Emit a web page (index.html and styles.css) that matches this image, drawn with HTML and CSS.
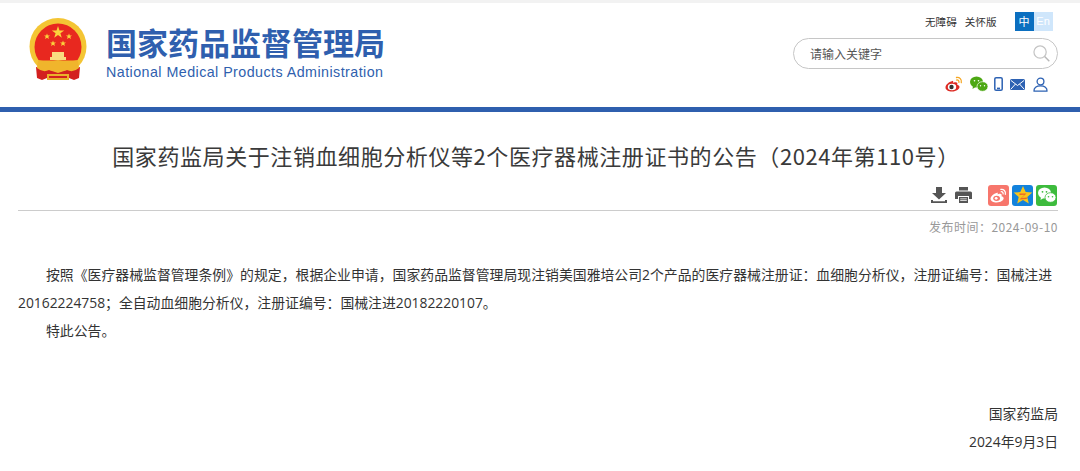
FILE: index.html
```html
<!DOCTYPE html>
<html lang="zh-CN">
<head>
<meta charset="utf-8">
<title>国家药监局关于注销血细胞分析仪等2个医疗器械注册证书的公告</title>
<link rel="stylesheet" href="styles.css">
</head>
<body>
<header class="site-header">
  <div class="brand">
    <svg class="emblem" viewBox="0 0 60 64" width="60" height="64" aria-hidden="true">
      <circle cx="30" cy="28.500" r="28.500" fill="#f4c534"/>
      <circle cx="30" cy="29" r="23.500" fill="#e8281f"/>
      <path d="M30 8l1.500 4.500h4.700l-3.800 2.800 1.400 4.500-3.800-2.800-3.800 2.800 1.400-4.500-3.800-2.800h4.700z" fill="#fbd33c"/>
      <path d="M19 15.500l.8 2h2.200l-1.700 1.300.6 2.100-1.900-1.200-1.900 1.200.6-2.100-1.700-1.300h2.200z M41 15.500l.8 2h2.200l-1.700 1.300.6 2.100-1.900-1.200-1.900 1.200.6-2.100-1.700-1.300h2.200z M25 22.500l.8 2h2.200l-1.700 1.300.6 2.100-1.900-1.200-1.900 1.200.6-2.100-1.700-1.300h2.200z M35 22.500l.8 2h2.200l-1.700 1.300.6 2.100-1.900-1.200-1.900 1.200.6-2.100-1.700-1.300h2.200z" fill="#fbd33c"/>
      <path d="M8 49L9 60 14 62 24 58 36 58 46 62 51 60 52 49 30 54z" fill="#d3201f"/>
      <path d="M22 42v-3h2v-5h12v5h2v3z" fill="#f9dc80"/>
      <path d="M10 42q10 1 20 0q10 1 20 0l1 8q-6 5-12 2l-9 3-9-3q-6 3-12-2z" fill="#f0b52c"/>
      <path d="M19 56h22v6H19z" fill="#eab02a"/>
      <path d="M21 58h18v2H21z" fill="#d3201f"/>
    </svg>
    <div class="brand-text">
      <div class="brand-cn">国家药品监督管理局</div>
      <div class="brand-en">National Medical Products Administration</div>
    </div>
  </div>
  <div class="tools">
    <div class="tool-links">
      <a class="tool-link">无障碍</a>
      <a class="tool-link">关怀版</a>
      <div class="lang"><span class="lang-zh">中</span><span class="lang-en">En</span></div>
    </div>
    <div class="search">
      <span class="search-text">请输入关键字</span>
      <svg class="search-icon" viewBox="0 0 18 18" width="17" height="17" aria-hidden="true">
        <circle cx="7.500" cy="7.500" r="6.500" fill="none" stroke="#c4c4c4" stroke-width="1.300"/>
        <path d="M12.300 12.300L17.300 17.300" stroke="#b8b8b8" stroke-width="1.500"/>
      </svg>
    </div>
    <div class="social">
      <svg viewBox="0 0 18 16" width="18" height="16" aria-hidden="true">
        <path d="M7.500 5C3.500 6 .5 9 .5 11.500c0 2.500 3 4 6.500 4 4.500 0 7.500-2.500 7.500-4.500 0-1.600-1.500-2-2.300-2.300.6-1.500.2-2.700-2-2.500-.8 0-1.700.5-2 .6 .2-1.500-.3-2.300-.7-1.800z" fill="#dd2a23"/>
        <ellipse cx="7" cy="11" rx="4.200" ry="3.200" fill="#fff"/>
        <circle cx="6.500" cy="11" r="2.200" fill="#333"/>
        <path d="M11.500 1.500c3-.6 5.500 2 4.800 5.200 M11.800 4c1.500-.3 2.400 1 2.100 2.400" fill="none" stroke="#f5a623" stroke-width="1.300" stroke-linecap="round"/>
      </svg>
      <svg viewBox="0 0 18 16" width="18" height="16" aria-hidden="true">
        <ellipse cx="6.500" cy="6" rx="6.500" ry="5.500" fill="#4da814"/>
        <path d="M3 10l-.5 3 3-2z" fill="#4da814"/>
        <ellipse cx="12.500" cy="10.500" rx="5.500" ry="4.800" fill="#4da814" stroke="#fff" stroke-width=".7"/>
        <circle cx="4.500" cy="4.800" r=".8" fill="#fff"/><circle cx="8.500" cy="4.800" r=".8" fill="#fff"/>
        <circle cx="10.500" cy="9.800" r=".7" fill="#fff"/><circle cx="14.500" cy="9.800" r=".7" fill="#fff"/>
      </svg>
      <svg viewBox="0 0 9 14" width="9" height="14" aria-hidden="true">
        <rect x=".8" y=".8" width="7.400" height="12.400" rx="1.300" fill="none" stroke="#2d62b3" stroke-width="1.500"/>
        <rect x="3" y="10.600" width="3" height="1.600" fill="#2d62b3"/>
      </svg>
      <svg viewBox="0 0 15 11" width="15" height="11" aria-hidden="true">
        <rect width="15" height="11" rx="1.500" fill="#2d62b3"/>
        <path d="M1 1.500l6.500 5 6.500-5 M1 10l4.500-5 M14 10l-4.500-5" fill="none" stroke="#fff" stroke-width="1"/>
      </svg>
      <svg class="user-icon" viewBox="0 0 15 15" width="15" height="15" aria-hidden="true">
        <circle cx="7.500" cy="4.500" r="3.400" fill="none" stroke="#2d62b3" stroke-width="1.300"/>
        <path d="M1 14.200c-.4-3.600 2.500-5.400 6.500-5.400s6.900 1.800 6.500 5.400z" fill="none" stroke="#2d62b3" stroke-width="1.300" stroke-linejoin="round"/>
      </svg>
    </div>
  </div>
</header>

<main class="article">
  <h1 class="title">国家药监局关于注销血细胞分析仪等2个医疗器械注册证书的公告（2024年第110号）</h1>
  <div class="actions">
    <svg viewBox="0 0 16 16" width="16" height="16" aria-hidden="true">
      <path d="M5 0h6v6h4l-7 6.500L1 6h4z M0 13h2v1.300h12V13h2v3H0z" fill="#555"/>
    </svg>
    <svg class="print" viewBox="0 0 17 16" width="17" height="16" aria-hidden="true">
      <path d="M4 0h9v3.500H4z" fill="#555"/>
      <path d="M1.500 4.500h14A1.500 1.500 0 0 1 17 6v6h-3V9H3v3H0V6a1.500 1.500 0 0 1 1.500-1.500z" fill="#555"/>
      <path d="M4 10h9v6H4z" fill="#555"/><path d="M5.200 11.500h6.600v.8H5.200zM5.200 13.300h6.600v.8H5.200z" fill="#fff"/>
    </svg>
    <span class="share share-weibo">
      <svg viewBox="0 0 18 16" width="17" height="15" aria-hidden="true">
        <path d="M7.500 5C3.500 6 .5 9 .5 11.500c0 2.500 3 4 6.500 4 4.500 0 7.500-2.500 7.500-4.500 0-1.600-1.500-2-2.300-2.300.6-1.500.2-2.700-2-2.500-.8 0-1.700.5-2 .6 .2-1.500-.3-2.300-.7-1.800z" fill="#fff"/>
        <ellipse cx="7" cy="11" rx="3.600" ry="2.800" fill="#f7766c"/>
        <circle cx="6.500" cy="11" r="1.500" fill="#fff"/>
        <path d="M11.500 1.500c3-.6 5.500 2 4.800 5.200 M11.800 4c1.500-.3 2.400 1 2.100 2.400" fill="none" stroke="#fff" stroke-width="1.300" stroke-linecap="round"/>
      </svg>
    </span>
    <span class="share share-qzone">
      <svg viewBox="0 0 20 20" width="20" height="20" aria-hidden="true">
        <path d="M10 1l2.700 6 6.600.6-5 4.400 1.500 6.500L10 15l-5.800 3.500L5.700 12l-5-4.400 6.600-.6z" fill="#f8c51c"/>
        <path d="M6.500 8.500h7l-5 4.500 6-.5-1 1.500-7 .5 5-4.700-5 .2z" fill="#e8632a"/>
      </svg>
    </span>
    <span class="share share-wechat">
      <svg viewBox="0 0 18 16" width="18" height="16" aria-hidden="true">
        <ellipse cx="6.500" cy="6" rx="6.500" ry="5.500" fill="#fff"/>
        <path d="M3 10l-.5 3 3-2z" fill="#fff"/>
        <ellipse cx="12.500" cy="10.500" rx="5.500" ry="4.800" fill="#fff" stroke="#3dbb3d" stroke-width=".8"/>
        <circle cx="4.500" cy="4.800" r=".9" fill="#3dbb3d"/><circle cx="8.500" cy="4.800" r=".9" fill="#3dbb3d"/>
        <circle cx="10.500" cy="9.800" r=".8" fill="#3dbb3d"/><circle cx="14.500" cy="9.800" r=".8" fill="#3dbb3d"/>
      </svg>
    </span>
  </div>
  <div class="date">发布时间：2024-09-10</div>
  <div class="content">
    <p class="para">按照《医疗器械监督管理条例》的规定，根据企业申请，国家药品监督管理局现注销美国雅培公司2个产品的医疗器械注册证：血细胞分析仪，注册证编号：国械注进20162224758；全自动血细胞分析仪，注册证编号：国械注进20182220107。</p>
    <p class="para">特此公告。</p>
  </div>
  <div class="sign">
    <p class="sign-line">国家药监局</p>
    <p class="sign-line">2024年9月3日</p>
  </div>
</main>
</body>
</html>
```
FILE: styles.css
```css
* { box-sizing: border-box; }
html, body { margin: 0; padding: 0; height: 471px; overflow: hidden; }
body {
  background: #fff;
  border-top: 3px solid #f2f2f2;
  font-family: "Noto Sans CJK SC", "Liberation Sans", sans-serif;
  color: #333;
}
p { margin: 0; }

.site-header {
  height: 109px;
  border-bottom: 5px solid #2f5fae;
  display: flex;
  justify-content: space-between;
}
.brand { display: flex; align-items: flex-start; padding: 15px 0 0 28px; }
.emblem { flex: none; }
.brand-text { margin: 5px 0 0 18px; color: #2f5fae; }
.brand-cn { font-size: 31px; line-height: 38px; font-weight: 700; white-space: nowrap; }
.brand-en { font-family: "Liberation Sans", sans-serif; font-size: 14.300px; line-height: 18px; letter-spacing: .44px; margin-top: 2px; white-space: nowrap; }

.tools { width: 287px; padding-top: 9px; }
.tool-links { display: flex; align-items: center; height: 19px; padding-left: 132px; font-size: 10.600px; color: #333; }
.tool-link { margin-right: 8px; }
.lang { display: flex; margin-left: 10px; font-size: 11px; line-height: 19px; text-align: center; }
.lang-zh { width: 19px; background: #0b6fc0; color: #fff; }
.lang-en { width: 19px; background: #cfe6fb; color: #fff; font-family: "Liberation Sans", sans-serif; }
.search {
  width: 265px; height: 31px; margin-top: 7px;
  border: 1px solid #c6c6c6; border-radius: 16px;
  display: flex; align-items: center; justify-content: space-between;
  padding: 0 7px 0 16px;
}
.search-text { font-size: 12px; color: #555; }
.social { display: flex; align-items: center; padding: 6px 0 0 152px; gap: 6.500px; height: 24px; }
.user-icon { margin-left: 2px; }

.article { padding: 0 22px 0 18px; }
.title {
  margin: 0; padding-top: 25px; padding-right: 4px; height: 70px;
  font-size: 22px; line-height: 36px; font-weight: 400; color: #3a3a3a;
  text-align: center; white-space: nowrap; letter-spacing: .58px;
}
.actions {
  display: flex; align-items: center; justify-content: flex-end;
  height: 26px; padding-right: 1px;
}
.print { margin-left: 8px; }
.share { width: 21px; height: 21px; border-radius: 3px; margin-left: 3px; display: flex; align-items: center; justify-content: center; }
.share-weibo { background: #f7766c; margin-left: 16px; }
.share-qzone { background: #1282dc; }
.share-wechat { background: #3dbb3d; }
.date {
  border-top: 1px solid #ccc; margin-top: 2px; padding-top: 7px;
  font-size: 12px; line-height: 17px; color: #999; text-align: right; letter-spacing: .5px;
}
.content { margin-top: 26px; padding-right: 6px; font-family: "Open Sans", "Noto Sans CJK SC", sans-serif; }
.para { font-size: 13.850px; line-height: 28px; text-indent: 28px; color: #333; text-align: justify; }
.sign { margin-top: 55px; text-align: right; font-family: "Open Sans", "Noto Sans CJK SC", sans-serif; }
.sign-line { font-size: 13.850px; line-height: 28px; }
```
